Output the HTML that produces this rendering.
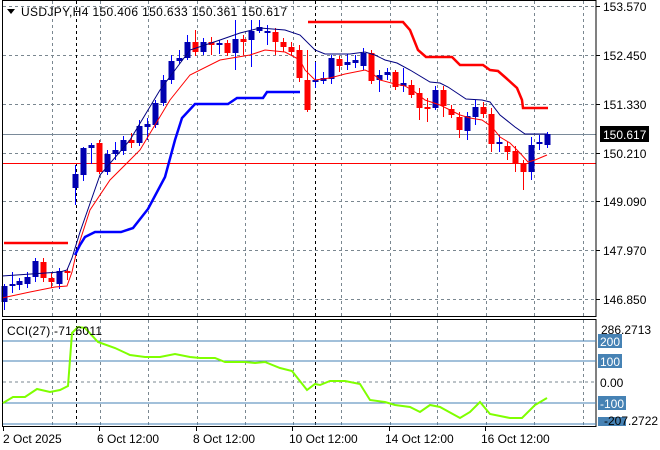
<!DOCTYPE html>
<html><head><meta charset="utf-8"><style>
html,body{margin:0;padding:0;background:#fff;width:660px;height:450px;overflow:hidden}
svg{display:block}
text{font-family:"Liberation Sans",sans-serif;font-size:12px;fill:#000}
</style></head><body>
<svg id="s" width="660" height="450" viewBox="0 0 660 450" xmlns="http://www.w3.org/2000/svg">
<g id="grid" stroke="#7a8790" stroke-dasharray="3,3" stroke-width="1"></g>
<line x1="2" y1="163.5" x2="596" y2="163.5" stroke="#ff0000"/>
<line x1="2" y1="134.5" x2="596" y2="134.5" stroke="#7a8a99"/>
<g id="c"></g>
<polyline fill="none" stroke="#ff0000" stroke-width="1" points="2,298 30,292 55,287 67,286 72,272 77,250 90,210 110,180 140,150 170,100 190,75 220,60 250,55 265,50 285,52 300,60 305,70 315,80 330,78 345,74 365,70 372,73 380,80 395,84 405,86 415,92 425,100 440,105 460,115 470,118 482,120 492,127 500,137 510,143 520,153 528,162 535,160 547,155"/>
<polyline fill="none" stroke="#000080" stroke-width="1" points="2,276 60,272 67,270 72,258 80,232 100,175 130,140 160,90 190,50 220,40 240,33 260,28 285,30 300,35 315,50 325,54 350,54 365,52 375,55 385,60 397,63 410,70 430,82 440,83 448,87 460,95 466,99 482,100 490,102 500,115 515,127 525,134 547,134"/>
<polyline fill="none" stroke="#ff0000" stroke-width="2.5" points="4,243 68,243"/>
<polyline fill="none" stroke="#ff0000" stroke-width="2.5" points="308,22 403,22 410,30 418,50 426,57 452,57 460,65 483,65 490,70 498,71 506,78 517,88 522,100 523,108 548,108"/>
<polyline fill="none" stroke="#0000ff" stroke-width="2.5" points="75,255 80,245 85,237 95,232 121,232 133,228 148,209 165,177 175,140 182,118 195,104 228,104 237,98 263,98 267,92 300,92"/>
<rect x="2.5" y="0.5" width="593.5" height="316" fill="none" stroke="#000"/>
<rect x="2.5" y="319.5" width="593.5" height="107" fill="none" stroke="#000"/>
<g stroke="#4682b4"><line x1="3" y1="341" x2="596" y2="341"/><line x1="3" y1="361" x2="596" y2="361"/><line x1="3" y1="403" x2="596" y2="403"/><line x1="3" y1="424" x2="596" y2="424"/></g>
<line x1="3" y1="382" x2="596" y2="382" stroke="#7a8790" stroke-dasharray="3,3"/>
<polyline fill="none" stroke="#7fff00" stroke-width="2" points="3,403 13,397 25,397 37,389 50,392 60,390 68,386 72,333 78,327 85,328 98,342 115,348 130,355 145,357 160,357 175,354 190,357 200,358 215,358 225,362 245,362 255,363 265,362 280,368 292,371 307,390 315,384 320,385 330,381 345,381 360,384 370,400 385,402 395,405 410,407 420,412 430,405 440,407 460,418 470,412 480,402 490,414 510,418 522,418 535,405 547,398"/>
<polygon points="7,9 15,9 11,14" fill="#000"/>
<text x="21" y="16" textLength="266" lengthAdjust="spacing">USDJPY,H4  150.406 150.633 150.361 150.617</text>
<text x="7" y="335" textLength="95" lengthAdjust="spacing">CCI(27) -71.6011</text>
<g id="ax"></g>
<rect x="600" y="126" width="49" height="16" fill="#000"/>
<text x="603" y="139" style="fill:#fff">150.617</text>
<g fill="#4682b4"><rect x="598" y="334" width="24" height="14"/><rect x="598" y="354" width="24" height="14"/><rect x="598" y="396" width="28" height="14"/><rect x="598" y="417" width="28" height="9"/></g>
<text x="600" y="346" style="fill:#fff">200</text>
<text x="600" y="366" style="fill:#fff">100</text>
<text x="600" y="408" style="fill:#fff">-100</text>
<text x="601" y="334">286.2713</text>
<text x="600" y="387">0.00</text>
<text x="604" y="425">-207.2722</text>
<g font-size="12">
<text x="3" y="443">2 Oct 2025</text><text x="97" y="443">6 Oct 12:00</text><text x="193" y="443">8 Oct 12:00</text><text x="289" y="443">10 Oct 12:00</text><text x="385" y="443">14 Oct 12:00</text><text x="481" y="443">16 Oct 12:00</text>
</g>
</svg>
<script>
var NS="http://www.w3.org/2000/svg";
function el(p,t,a){var e=document.createElementNS(NS,t);for(var k in a)e.setAttribute(k,a[k]);p.appendChild(e);return e;}
var g=document.getElementById('grid');
[52,100,148,197,245,293,341,390,437,486,534,583].forEach(function(x){el(g,'line',{x1:x+.5,y1:1,x2:x+.5,y2:316});el(g,'line',{x1:x+.5,y1:320,x2:x+.5,y2:426});});
[6,55,104,153,201,250,299].forEach(function(y){el(g,'line',{x1:3,y1:y+.5,x2:596,y2:y+.5});});
[76,315].forEach(function(x){el(g,'line',{x1:x+.5,y1:1,x2:x+.5,y2:316,stroke:'#000'});el(g,'line',{x1:x+.5,y1:320,x2:x+.5,y2:426,stroke:'#000'});});
var ax=document.getElementById('ax');
[[6,'153.570'],[55,'152.450'],[104,'151.330'],[153,'150.210'],[201,'149.090'],[250,'147.970'],[299,'146.850']].forEach(function(a){el(ax,'line',{x1:596,y1:a[0]+.5,x2:600,y2:a[0]+.5,stroke:'#000'});var t=el(ax,'text',{x:603,y:a[0]+5});t.textContent=a[1];});
[3,99,196,292,389,485].forEach(function(x){el(ax,'line',{x1:x+.5,y1:427,x2:x+.5,y2:431,stroke:'#000'});});
var C=[[4,286,302,'b',284,310],[12,284,286,'b',272,293],[19,281,285,'b',278,290],[27,277,284,'b',272,288],[35,261,277,'b',258,282],[43,262,278,'r',258,282],[51,278,282,'r',273,288],[59,271,284,'b',268,289],[67,271,273,'r',268,280],
[75,174,188,'b',165,205],[83,148,175,'b',147,181],[91,145,148,'b',143,164],[99,143,172,'r',140,174],[107,154,172,'b',150,175],[115,150,154,'b',142,160],[123,140,151,'b',136,155],[131,140,143,'r',133,148],[139,126,143,'b',120,146],[147,124,127,'b',118,140],[155,103,125,'b',100,128],[163,80,103,'b',75,106],[171,61,80,'b',55,84],[179,58,61,'b',50,64],[187,42,58,'b',35,60],[195,42,52,'r',30,56],[203,42,52,'b',38,55],[211,42,45,'r',37,55],[219,43,45,'b',40,54],[227,43,53,'r',40,56],[235,39,53,'b',20,70],[243,39,42,'r',35,55],[251,31,40,'b',20,67],[259,27,31,'b',20,33],[267,31,33,'b',25,45],[275,32,42,'r',28,55],[283,42,47,'r',38,52],[291,47,52,'r',42,56],[299,50,78,'r',45,82],[307,80,110,'r',50,112],
[315,80,82,'b',62,88],[323,78,81,'b',72,84],[331,58,79,'b',55,84],[339,59,66,'r',56,72],[347,62,65,'b',54,70],[355,60,63,'b',55,68],[363,53,66,'b',48,70],[371,53,81,'r',50,84],[379,75,80,'b',70,92],[387,72,75,'b',68,80],[395,72,87,'r',70,90],[403,83,86,'b',68,92],[411,85,95,'r',80,98],[419,93,108,'r',88,120],[427,107,109,'r',98,122],[435,90,108,'b',86,110],[443,90,106,'r',86,117],[451,109,115,'r',105,118],[459,117,130,'r',112,138],[467,116,131,'b',112,140],[475,107,117,'b',100,125],[483,107,114,'r',102,118],[491,114,144,'r',108,152],[499,142,144,'b',135,152],[507,146,152,'r',142,160],[515,151,163,'r',146,172],[523,163,172,'r',160,190],[531,145,172,'b',137,180],[539,142,144,'b',135,150],[547,134,145,'b',132,148]];
var cg=document.getElementById('c');
C.forEach(function(c){var col=c[3]=='b'?'#0000ff':'#ff0000';
el(cg,'line',{x1:c[0]+.5,y1:c[4],x2:c[0]+.5,y2:c[5],stroke:col});
el(cg,'rect',{x:c[0]-2.5,y:c[1],width:6,height:Math.max(2,c[2]-c[1]),fill:c[3]=='b'?'#0000b0':'#ff0000'});});
</script>
</body></html>
